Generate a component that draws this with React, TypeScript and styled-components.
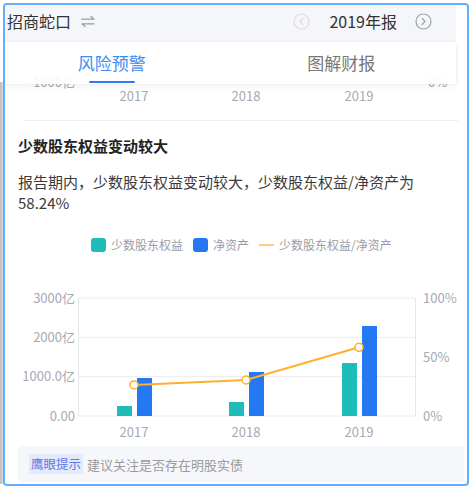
import React from 'react';
import styled, { createGlobalStyle } from 'styled-components';

const GlobalStyle = createGlobalStyle`
  html, body {
    margin: 0;
    padding: 0;
    background: #fff;
  }
  body {
    font-family: "Noto Sans CJK SC", "Noto Sans", sans-serif;
  }
`;

// äußere Hülle mit dem grauen Rand links
const Shell = styled.div`
  display: flex;
  align-items: flex-start;
  width: 472px;
  height: 488px;
`;

const GreyEdge = styled.div`
  width: 3px;
  height: 402px;
  margin-top: 82px;
  background: linear-gradient(to right, #bdbdbd, #d9d9d9);
`;

const Frame = styled.div`
  position: relative;
  box-sizing: border-box;
  width: 466px;
  height: 483px;
  margin-top: 3px;
  border: 2px solid #62b0fd;
  border-radius: 4px;
  overflow: hidden;
  background: #fff;
`;

// Kopfbereich, liegt über dem gescrollten Inhalt
const Overlay = styled.div`
  position: absolute;
  top: 0;
  left: 0;
  width: 451px;
  z-index: 2;
`;

const HeaderBar = styled.div`
  display: flex;
  align-items: center;
  box-sizing: border-box;
  height: 37px;
  padding: 0 24px 5px 2px;
  background: #f5f6fa;
`;

const Company = styled.span`
  font-size: 16px;
  color: #333;
  line-height: 22px;
`;

const SwapIcon = styled.svg`
  margin-left: 10px;
  margin-top: 1px;
`;

const Spacer = styled.div`
  flex: 1;
`;

const YearText = styled.span`
  font-size: 16px;
  color: #333;
  line-height: 22px;
  margin: 0 18px 0 19px;
`;

const TabPanel = styled.div`
  height: 42px;
  background: rgba(255, 255, 255, 0.9);
  box-shadow: 0 3px 6px rgba(0, 0, 0, 0.05), 1px 0 2px rgba(0, 0, 0, 0.04);
`;

const TabRow = styled.div`
  display: flex;
  width: 459px;
  height: 42px;
  margin-left: -8px;
`;

const Tab = styled.div<{ $active?: boolean }>`
  position: relative;
  flex: 1;
  display: flex;
  justify-content: center;
  align-items: center;
  padding-bottom: 1px;
  font-size: 17px;
  color: ${(p) => (p.$active ? '#3d8bf2' : '#777')};

  &::after {
    content: '';
    display: ${(p) => (p.$active ? 'block' : 'none')};
    position: absolute;
    bottom: 1px;
    left: 50%;
    width: 46px;
    height: 2.5px;
    margin-left: -23px;
    border-radius: 2px;
    background: #2f7cf0;
  }
`;

// gescrollter Inhalt
const Content = styled.div`
  display: flex;
  flex-direction: column;
  padding: 0 3px 0 13px;
`;

const Divider = styled.div`
  height: 1px;
  margin: 13px 6px 0;
  background: #efeff2;
`;

const Title = styled.h3`
  margin: 14px 0 0;
  font-size: 15px;
  line-height: 22px;
  font-weight: 700;
  color: #222;
`;

const Paragraph = styled.p`
  margin: 14px 0 0;
  width: 420px;
  font-size: 15px;
  line-height: 21px;
  color: #3a3a3a;
`;

const Legend = styled.div`
  display: flex;
  align-items: center;
  height: 14px;
  margin-top: 25px;
  padding-left: 73px;
`;

const Swatch = styled.span<{ $color: string }>`
  width: 15px;
  height: 14px;
  border-radius: 3px;
  background: ${(p) => p.$color};
`;

const LineSwatch = styled.span`
  width: 15px;
  height: 2px;
  background: #ffcf80;
`;

const LegendText = styled.span`
  margin: 0 10px 0 5px;
  font-size: 12px;
  line-height: 14px;
  color: #9a9ca6;
`;

const ChartSvg = styled.svg`
  display: block;
  margin-top: 3px;
`;

const TipBox = styled.div`
  display: flex;
  align-items: center;
  height: 36px;
  margin-top: 6px;
  padding-left: 11px;
  background: #f5f7fb;
`;

const TipLabel = styled.span`
  height: 20px;
  padding: 0 2px;
  line-height: 20px;
  font-size: 12.5px;
  color: #5e76e4;
  background: #e3eafb;
`;

const TipText = styled.span`
  margin-left: 4px;
  font-size: 13px;
  color: #9b9b9b;
`;

const CircleChevron = ({ dir, color }: { dir: 'left' | 'right'; color: string }) => (
  <svg width="17" height="17" viewBox="0 0 17 17">
    <circle cx="8.5" cy="8.5" r="7.5" fill="none" stroke={color} strokeWidth="1.2" />
    <path
      d={dir === 'left' ? 'M9.8 5.5 L7 8.5 L9.8 11.5' : 'M7.2 5.5 L10 8.5 L7.2 11.5'}
      fill="none"
      stroke={color}
      strokeWidth="1.2"
      strokeLinecap="round"
      strokeLinejoin="round"
    />
  </svg>
);

const years = ['2017', '2018', '2019'];
const minority = [254, 356, 1347];
const netAssets = [966, 1119, 2288];
const ratio = [26.3, 30.5, 58.24];
const centers = [116, 228, 341];

const LABEL = '#a6a9b4';
const BASE = 161;
const TOP = 43;
const H = BASE - TOP;

const Chart = () => {
  const points = centers.map((x, i) => [x, BASE - (ratio[i] / 100) * H]);
  return (
    <ChartSvg width="446" height="185" viewBox="0 0 446 185">
      {[0, 1, 2, 3].map((i) => (
        <line key={i} x1="60" x2="397" y1={TOP + (H / 3) * i} y2={TOP + (H / 3) * i} stroke="#ececf0" strokeWidth="1" />
      ))}
      <line x1="60.5" x2="60.5" y1={TOP} y2={BASE} stroke="#e6e6ea" />
      <line x1="397.5" x2="397.5" y1={TOP} y2={BASE} stroke="#e6e6ea" />
      {['3000亿', '2000亿', '1000.0亿', '0.00'].map((t, i) => (
        <text key={t} x="57" y={TOP + (H / 3) * i + 4.5} textAnchor="end" fontSize="13" fill={LABEL}>
          {t}
        </text>
      ))}
      {['100%', '50%', '0%'].map((t, i) => (
        <text key={t} x="405" y={TOP + (H / 2) * i + 4.5} fontSize="13" fill={LABEL}>
          {t}
        </text>
      ))}
      {centers.map((x, i) => {
        const th = (minority[i] * H) / 3000;
        const bh = (netAssets[i] * H) / 3000;
        return (
          <g key={years[i]}>
            <rect x={x - 17} y={BASE - th} width="15" height={th} fill="#1fbdb9" />
            <rect x={x + 3} y={BASE - bh} width="15" height={bh} fill="#2478f2" />
            <text x={x} y="181.5" textAnchor="middle" fontSize="13" fill={LABEL}>
              {years[i]}
            </text>
          </g>
        );
      })}
      <polyline points={points.map((p) => p.join(',')).join(' ')} fill="none" stroke="#ffb02e" strokeWidth="2" />
      {points.map(([x, y]) => (
        <circle key={x} cx={x} cy={y} r="4" fill="#fff" stroke="#ffb02e" strokeWidth="1.5" />
      ))}
    </ChartSvg>
  );
};

// Ende des vorherigen Diagramms, halb unter dem Kopf
const PrevTail = () => (
  <svg width="446" height="102" viewBox="0 0 446 102" style={{ display: 'block' }}>
    <text x="57" y="81.5" textAnchor="end" fontSize="13" fill={LABEL}>
      -1000亿
    </text>
    <text x="410" y="81.5" fontSize="13" fill={LABEL}>
      0%
    </text>
    {centers.map((x, i) => (
      <text key={x} x={x} y="95.5" textAnchor="middle" fontSize="13" fill={LABEL}>
        {years[i]}
      </text>
    ))}
  </svg>
);

const App = () => (
  <>
    <GlobalStyle />
    <Shell>
      <GreyEdge />
      <Frame>
        <Overlay>
          <HeaderBar>
            <Company>招商蛇口</Company>
            <SwapIcon width="14" height="11" viewBox="0 0 14 11">
              <path d="M1 3.2 H13 L10 0.6" fill="none" stroke="#9a9ba3" strokeWidth="1.3" strokeLinecap="round" strokeLinejoin="round" />
              <path d="M13 7.8 H1 L4 10.4" fill="none" stroke="#9a9ba3" strokeWidth="1.3" strokeLinecap="round" strokeLinejoin="round" />
            </SwapIcon>
            <Spacer />
            <CircleChevron dir="left" color="#dcdce2" />
            <YearText>2019年报</YearText>
            <CircleChevron dir="right" color="#a2a3ab" />
          </HeaderBar>
          <TabPanel>
            <TabRow>
              <Tab $active>风险预警</Tab>
              <Tab>图解财报</Tab>
            </TabRow>
          </TabPanel>
        </Overlay>
        <Content>
          <PrevTail />
          <Divider />
          <Title>少数股东权益变动较大</Title>
          <Paragraph>报告期内，少数股东权益变动较大，少数股东权益/净资产为58.24%</Paragraph>
          <Legend>
            <Swatch $color="#1fbdb9" />
            <LegendText>少数股东权益</LegendText>
            <Swatch $color="#2478f2" />
            <LegendText>净资产</LegendText>
            <LineSwatch />
            <LegendText>少数股东权益/净资产</LegendText>
          </Legend>
          <Chart />
          <TipBox>
            <TipLabel>鹰眼提示</TipLabel>
            <TipText>建议关注是否存在明股实债</TipText>
          </TipBox>
        </Content>
      </Frame>
    </Shell>
  </>
);

export default App;
